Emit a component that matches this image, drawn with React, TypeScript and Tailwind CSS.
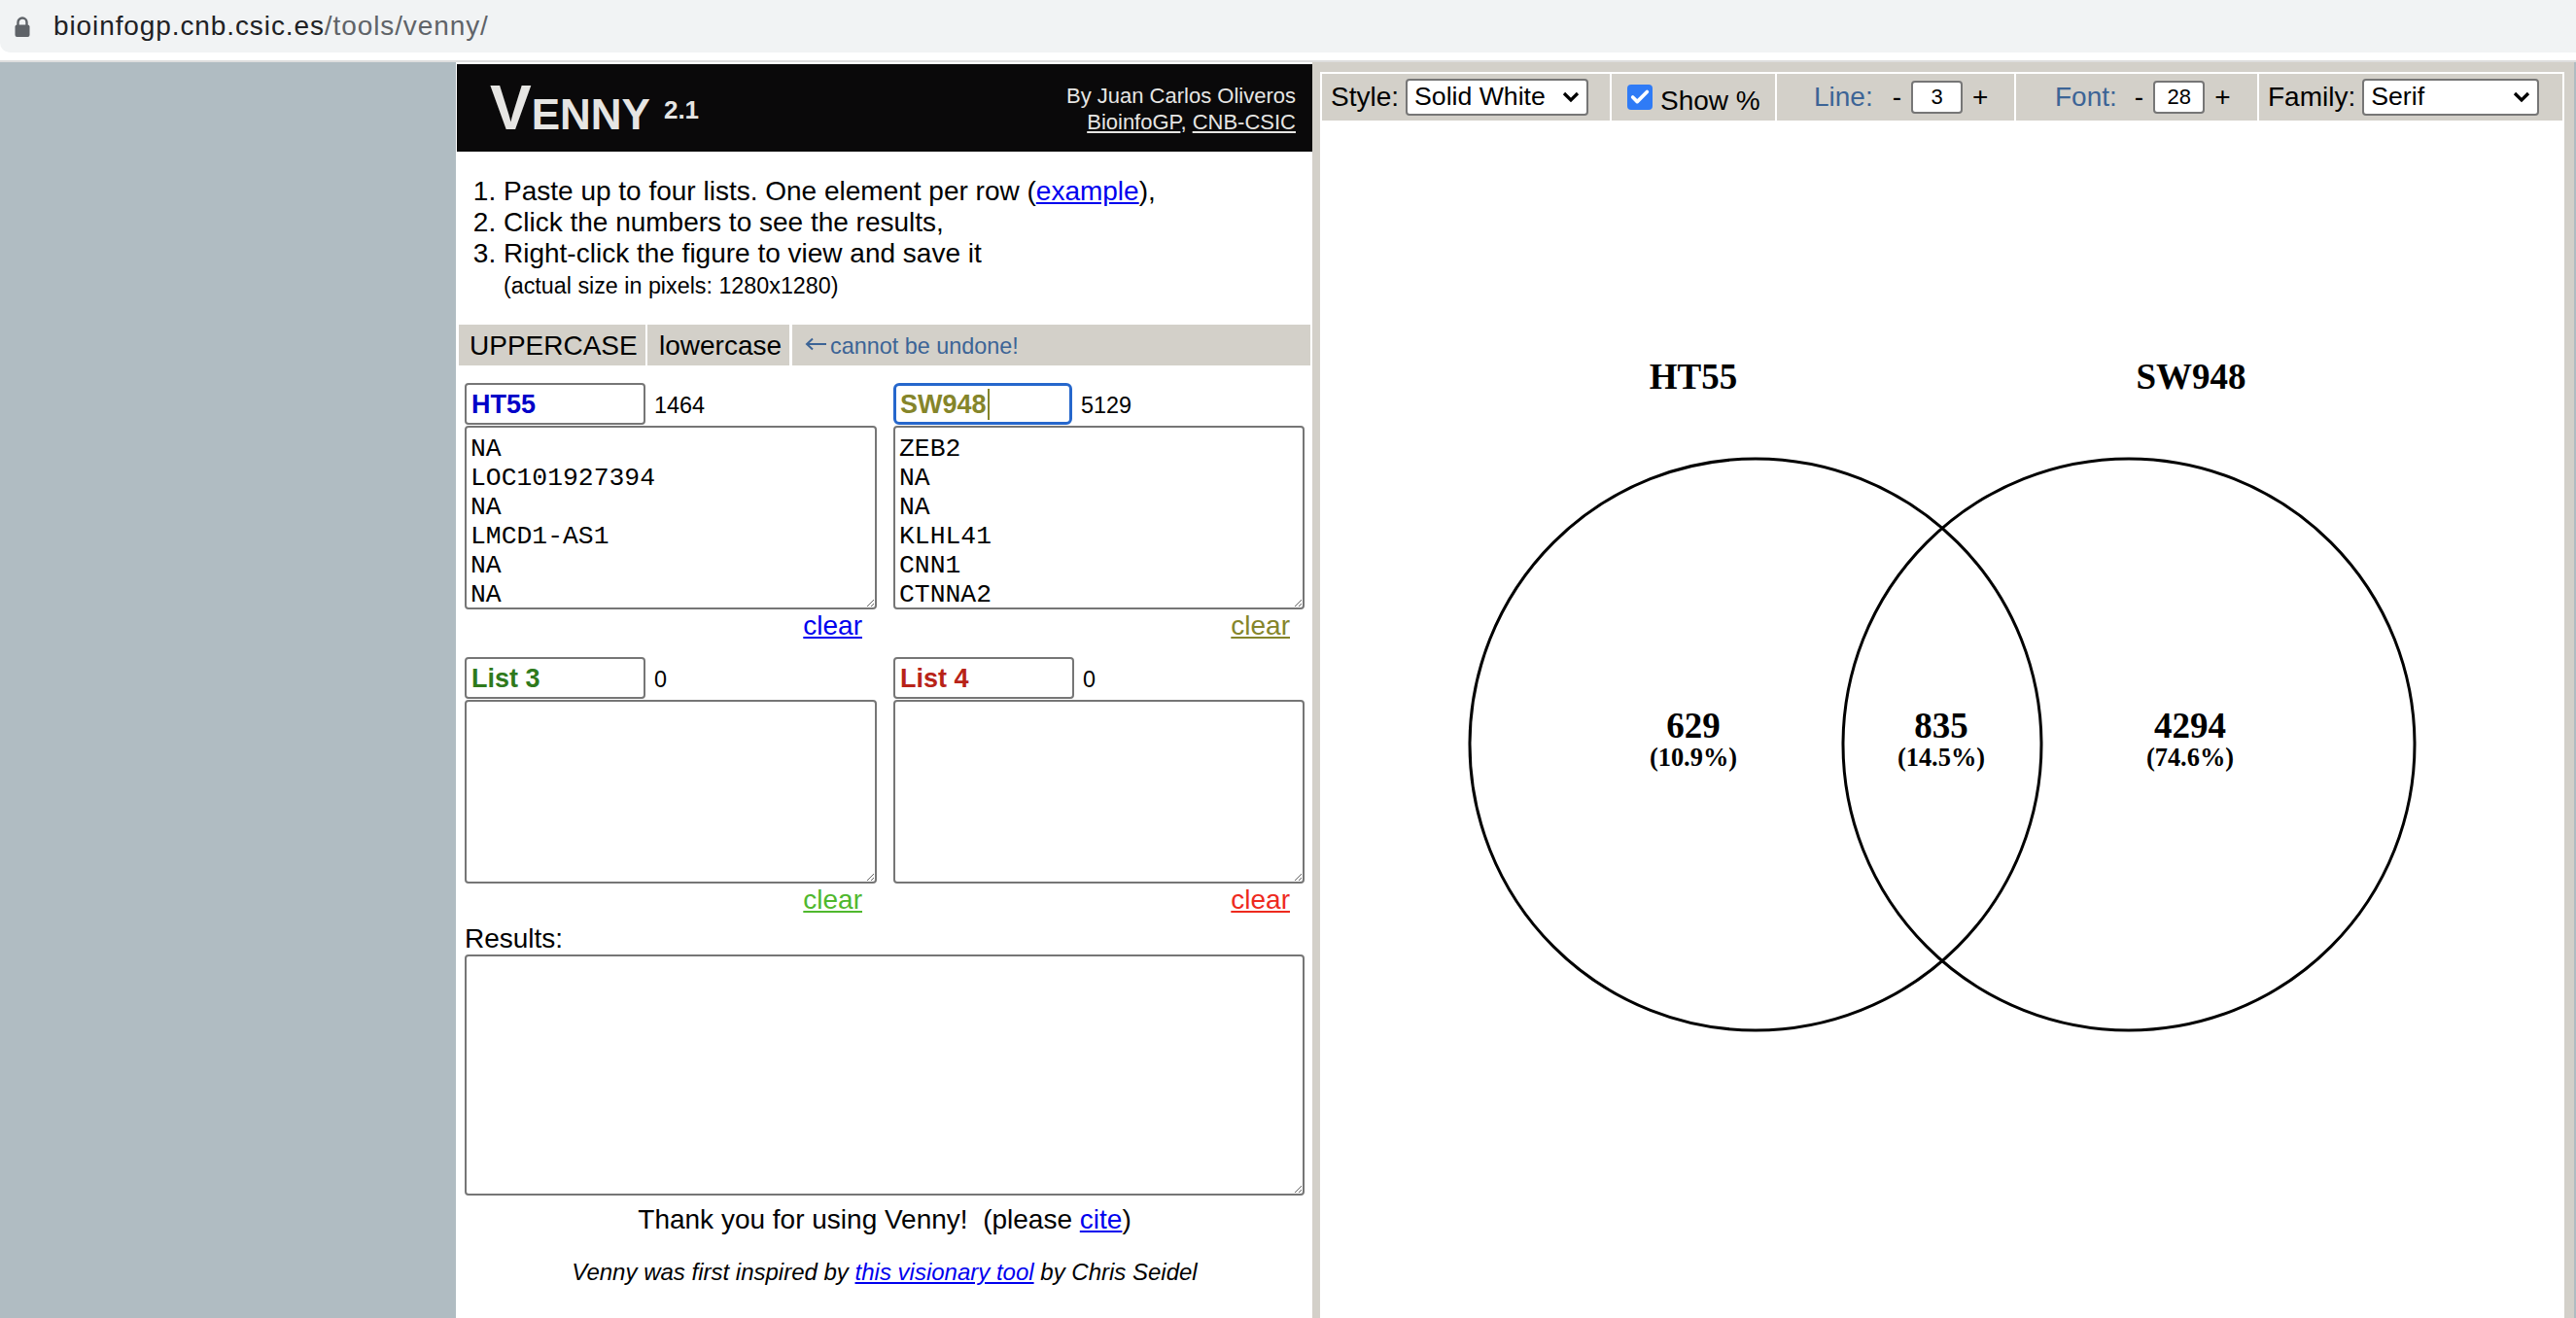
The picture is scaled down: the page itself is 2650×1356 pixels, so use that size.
import { Check } from "lucide-react";

const lists = [
  [
    { title: "HT55", titleColor: "text-[#0000c8]", count: "1464", text: "NA\nLOC101927394\nNA\nLMCD1-AS1\nNA\nNA", clearColor: "text-[#0000ee]" },
    { title: "SW948", titleColor: "text-[#85852a]", count: "5129", text: "ZEB2\nNA\nNA\nKLHL41\nCNN1\nCTNNA2", clearColor: "text-[#85852a]", focused: true },
  ],
  [
    { title: "List 3", titleColor: "text-[#2f7a1c]", count: "0", text: "", clearColor: "text-[#4fb82e]" },
    { title: "List 4", titleColor: "text-[#b82318]", count: "0", text: "", clearColor: "text-[#ee2a1e]" },
  ],
];

function ListBox({ item }: { item: any }) {
  return (
    <div className="flex flex-col">
      <div className="flex items-baseline h-[44px]">
        <div className="relative">
          {item.focused ? (
            <>
              <input
                readOnly
                defaultValue={item.title}
                className={`block w-[184px] h-[43px] border-[3px] border-[#2667cc] rounded-[6px] px-[4px] pt-[1px] font-bold text-[27px] outline-none ${item.titleColor}`}
              />
              <span className="absolute left-[97px] top-[6px] w-[2px] h-[32px] bg-[#85852a]" />
            </>
          ) : (
            <input
              readOnly
              defaultValue={item.title}
              className={`block w-[186px] h-[43px] border-2 border-[#767676] rounded-[4px] px-[5px] pt-[1px] font-bold text-[27px] outline-none ${item.titleColor}`}
            />
          )}
        </div>
        <span className="ml-[9px] text-[23.4px] text-black">{item.count}</span>
      </div>
      <textarea
        readOnly
        defaultValue={item.text}
        className="block w-full h-[189px] resize overflow-hidden border-2 border-[#767676] rounded-[4px] pl-[4px] pt-[7px] font-['Liberation_Mono',monospace] text-[26.4px] leading-[30px] text-black outline-none"
      />
      <div className="h-[32px] pt-[1px] pr-[15px] text-right text-[28px] leading-[32px]">
        <a href="#" className={`underline ${item.clearColor}`}>clear</a>
      </div>
    </div>
  );
}

function SelectBox({ value, width }: { value: string; width: string }) {
  return (
    <div className={`relative ${width}`}>
      <select
        defaultValue={value}
        className="block w-full h-[38px] appearance-none bg-white border-2 border-[#767676] rounded-[4px] pl-[7px] pt-[2px] pb-[4px] leading-[28px] text-[26.67px] text-black outline-none"
      >
        <option>{value}</option>
      </select>
      <svg className="absolute right-[9px] top-[13px] pointer-events-none" width="18" height="12" viewBox="0 0 18 12">
        <path d="M2 2l7 7 7-7" fill="none" stroke="#000" strokeWidth="3.2" />
      </svg>
    </div>
  );
}

function Stepper({ label, value, pl, gap }: { label: string; value: string; pl: string; gap: string }) {
  return (
    <div className={`flex items-center h-full ${pl}`}>
      <span className="text-[#3c6496]">{label}</span>
      <span className={gap}>-</span>
      <input
        readOnly
        defaultValue={value}
        className="ml-[10px] w-[53px] h-[34px] bg-white border-2 border-[#767676] rounded-[4px] text-center text-[22px] text-black outline-none"
      />
      <span className="ml-[10px]">+</span>
    </div>
  );
}

export default function App() {
  return (
    <div className="w-[2650px] h-[1356px] overflow-hidden flex flex-col bg-white font-['Liberation_Sans',Arial,sans-serif] text-black">
      <div className="h-[54px] shrink-0 bg-[#f1f3f4] rounded-bl-[10px] flex items-center pl-[14px]">
        <svg width="18" height="22" viewBox="0 0 18 22" className="mt-[1px]">
          <path d="M4.5 9V6a4.5 4.5 0 0 1 9 0v3" fill="none" stroke="#5f6368" strokeWidth="2.4" />
          <rect x="1.5" y="8.5" width="15" height="12.5" rx="2" fill="#5f6368" />
        </svg>
        <span className="ml-[23px] text-[28px] tracking-[0.9px] text-[#202124]">
          bioinfogp.cnb.csic.es<span className="text-[#5f6368]">/tools/venny/</span>
        </span>
      </div>
      <div className="h-[8px] shrink-0 bg-white" />
      <div className="h-[2px] shrink-0 bg-[#dedede]" />

      <div className="flex-1 flex min-h-0">
        <div className="w-[469px] bg-[#b0bcc2]" />

        <div className="w-[881px] bg-white pt-[2px] pl-[1px]">
          <div className="h-[90px] bg-[#0a090a] flex justify-between pl-[34px] pr-[17px] text-[#e6e5e3]">
            <div className="pt-[13px] font-bold leading-none text-[64px]">
              V<span className="text-[44px]">ENNY</span>
              <span className="ml-[14px] text-[26px] align-[11px]">2.1</span>
            </div>
            <div className="pt-[19px] text-right text-[22px] leading-[27px]">
              <div>By Juan Carlos Oliveros</div>
              <div>
                <a href="#" className="underline">BioinfoGP</a>, <a href="#" className="underline">CNB-CSIC</a>
              </div>
            </div>
          </div>

          <ol className="list-decimal pl-[48px] pt-[25px] text-[28px] leading-[32px]">
            <li>
              Paste up to four lists. One element per row (<a href="#" className="text-[#0000ee] underline">example</a>),
            </li>
            <li>Click the numbers to see the results,</li>
            <li>
              Right-click the figure to view and save it
              <div className="mt-[1px] text-[23.3px]">(actual size in pixels: 1280x1280)</div>
            </li>
          </ol>

          <div className="mt-[24px] ml-[2px] mr-[2px] h-[42px] flex text-[28px]">
            <div className="w-[192px] bg-[#d3d0c9] flex items-center pl-[11px] pt-[2px]">UPPERCASE</div>
            <div className="ml-[2px] w-[146px] bg-[#d3d0c9] flex items-center pl-[12px] pt-[2px]">lowercase</div>
            <div className="ml-[3px] flex-1 bg-[#d3d0c9] flex items-center pl-[13px] pt-[4px] text-[23.4px] text-[#3c6496]">
              <svg width="22" height="14" viewBox="0 0 22 14" className="mr-[4px] -mt-[6px]">
                <path d="M22 7H2M8 1.5L2 7l6 5.5" fill="none" stroke="#3c6496" strokeWidth="2" />
              </svg>
              cannot be undone!
            </div>
          </div>

          <div className="px-[8px] pt-[18px]">
            {lists.map((row, i) => (
              <div key={i} className={`grid grid-cols-[424px_423px] gap-x-[17px] ${i === 0 ? "mb-[17px]" : ""}`}>
                {row.map((item) => (
                  <ListBox key={item.title} item={item} />
                ))}
              </div>
            ))}
            <div className="mt-[9px] text-[28px] leading-[32px]">Results:</div>
            <textarea
              readOnly
              className="block w-[864px] h-[248px] resize overflow-hidden border-2 border-[#767676] rounded-[4px] outline-none"
            />
            <div className="mt-[9px] text-center text-[28px] leading-[32px] whitespace-pre">
              {"Thank you for using Venny!  (please "}
              <a href="#" className="text-[#0000ee] underline">cite</a>)
            </div>
            <div className="mt-[22px] text-center text-[24px] leading-[32px] italic">
              Venny was first inspired by <a href="#" className="text-[#0000ee] underline">this visionary tool</a> by Chris Seidel
            </div>
          </div>
        </div>

        <div className="w-[1298px] bg-[#d3d0c9] pl-[8px] pr-[10px] pt-[10px]">
          <div className="w-[1280px] h-full bg-white pt-[2px] px-[2px]">
            <div className="h-[48px] flex gap-[2px] text-[28px]">
              <div className="w-[296px] bg-[#d3d0c9] flex items-center pl-[9px]">
                <span>Style:</span>
                <div className="ml-[7px]">
                  <SelectBox value="Solid White" width="w-[188px]" />
                </div>
              </div>
              <div className="w-[168px] bg-[#d3d0c9] flex items-center pl-[16px]">
                <div className="relative w-[26px] h-[26px]">
                  <input type="checkbox" defaultChecked className="block appearance-none w-[26px] h-[26px] rounded-[4px] bg-[#2f7bf6]" />
                  <Check className="absolute left-[2px] top-[2px] pointer-events-none" size={22} color="#fff" strokeWidth={4} />
                </div>
                <span className="ml-[8px] mt-[8px]">Show %</span>
              </div>
              <div className="w-[244px] bg-[#d3d0c9]">
                <Stepper label="Line:" value="3" pl="pl-[38px]" gap="ml-[20px]" />
              </div>
              <div className="w-[248px] bg-[#d3d0c9]">
                <Stepper label="Font:" value="28" pl="pl-[40px]" gap="ml-[18px]" />
              </div>
              <div className="w-[312px] bg-[#d3d0c9] flex items-center pl-[9px]">
                <span>Family:</span>
                <div className="ml-[7px]">
                  <SelectBox value="Serif" width="w-[182px]" />
                </div>
              </div>
            </div>

            {/* figure: same coords as the 1280px wide image */}
            <svg width="1276" height="1232" viewBox="2 0 1276 1232" className="block" fontFamily="'Liberation Serif', serif" fontWeight="bold">
              <circle cx="448" cy="642" r="294" fill="none" stroke="#000" strokeWidth="3" />
              <circle cx="832" cy="642" r="294" fill="none" stroke="#000" strokeWidth="3" />
              <text x="384" y="276" fontSize="37" textAnchor="middle">HT55</text>
              <text x="896" y="276" fontSize="37" textAnchor="middle">SW948</text>
              <text x="384" y="635" fontSize="37" textAnchor="middle">629</text>
              <text x="384" y="664" fontSize="26.4" textAnchor="middle">(10.9%)</text>
              <text x="639" y="635" fontSize="37" textAnchor="middle">835</text>
              <text x="639" y="664" fontSize="26.4" textAnchor="middle">(14.5%)</text>
              <text x="895" y="635" fontSize="37" textAnchor="middle">4294</text>
              <text x="895" y="664" fontSize="26.4" textAnchor="middle">(74.6%)</text>
            </svg>
          </div>
        </div>

        <div className="flex-1 bg-[#b0bcc2]" />
      </div>
    </div>
  );
}
